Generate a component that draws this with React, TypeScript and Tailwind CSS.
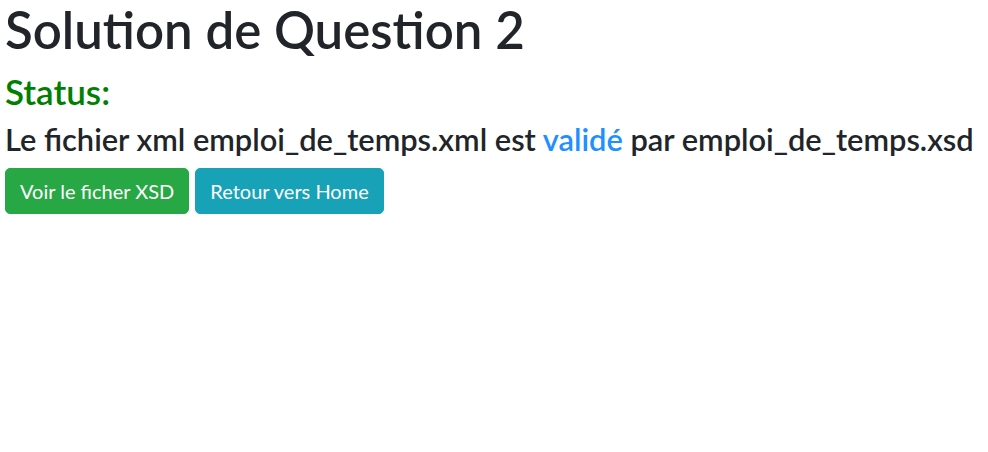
export default function App() {
  return (
    <div className="min-h-screen bg-white px-[5px] font-['Lato',sans-serif] text-[#212529]">
      <h1 className="mb-[10px] text-[51px] font-semibold leading-[60px]">Solution de Question 2</h1>
      <h3 className="mb-[10px] text-[35px] font-semibold leading-[42px] text-[#008000]">Status:</h3>
      <h4 className="mb-[10px] whitespace-nowrap text-[30.8px] font-semibold leading-[36px]">
        Le fichier xml emploi_de_temps.xml est <span className="text-[#1e90ff]">validé</span> par emploi_de_temps.xsd
      </h4>
      <div className="flex gap-[6px]">
        <button className="rounded-[5px] border border-[#28a745] bg-[#28a745] px-[14px] py-[7px] text-[20px] leading-[30px] text-white">
          Voir le ficher XSD
        </button>
        <button className="rounded-[5px] border border-[#17a2b8] bg-[#17a2b8] px-[14px] py-[7px] text-[20px] leading-[30px] text-white">
          Retour vers Home
        </button>
      </div>
    </div>
  )
}
